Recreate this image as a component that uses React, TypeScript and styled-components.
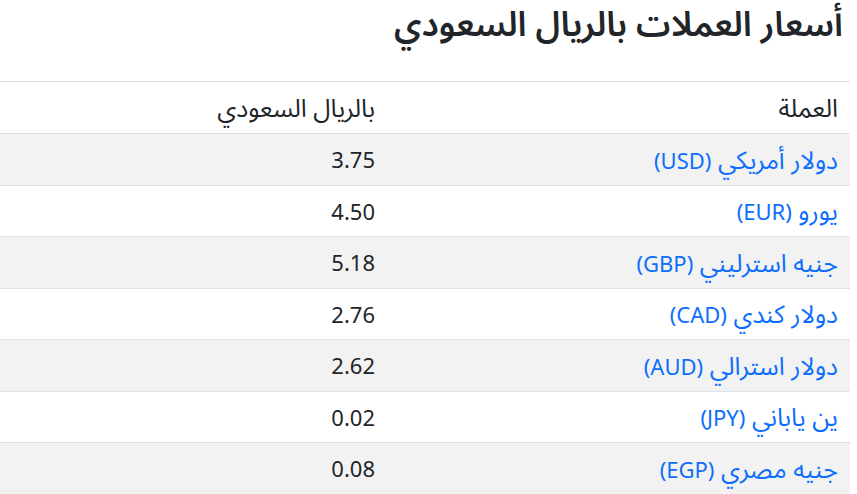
import React from 'react';
import styled, { createGlobalStyle } from 'styled-components';

const GlobalStyle = createGlobalStyle`
  html, body {
    margin: 0;
    padding: 0;
    background: #fff;
  }
  body {
    font-family: "Noto Sans", "Noto Sans Arabic", "Noto Naskh Arabic", "DejaVu Sans", sans-serif;
    color: #212529;
  }
`;

const Page = styled.div`
  direction: rtl;
  width: 850px;
  padding-top: 0;
`;

const Title = styled.h1`
  margin: 0 7px 0 0;
  height: 81px;
  font-size: 34.5px;
  font-weight: 600;
  line-height: 46px;
  color: #212529;
`;

const Table = styled.table`
  width: 850px;
  border-collapse: collapse;
  font-size: 25px;
`;

const HeadCell = styled.th`
  text-align: right;
  vertical-align: middle;
  font-weight: 400;
  height: 51px;
  padding: 0 12px;
  line-height: 1;
  border-top: 1px solid #dee2e6;
  border-bottom: 1px solid #dee2e6;
`;

const Row = styled.tr<{ $striped: boolean }>`
  background: ${(p) => (p.$striped ? '#f2f2f2' : '#fff')};
`;

const Cell = styled.td`
  text-align: right;
  vertical-align: middle;
  height: 50.5px;
  padding: 0 12px;
  line-height: 1;
  border-bottom: 1px solid #dee2e6;
`;

const NameCell = styled(Cell)`
  width: 439px;
`;

const ValueCell = styled(Cell)`
  font-size: 22px;
`;

const Link = styled.a`
  color: #0d6efd;
  text-decoration: none;
`;

const Code = styled.span`
  font-size: 22px;
`;

const rates = [
  { name: 'دولار أمريكي', code: 'USD', value: '3.75' },
  { name: 'يورو', code: 'EUR', value: '4.50' },
  { name: 'جنيه استرليني', code: 'GBP', value: '5.18' },
  { name: 'دولار كندي', code: 'CAD', value: '2.76' },
  { name: 'دولار استرالي', code: 'AUD', value: '2.62' },
  { name: 'ين ياباني', code: 'JPY', value: '0.02' },
  { name: 'جنيه مصري', code: 'EGP', value: '0.08' },
];

const App = () => {
  return (
    <>
      <GlobalStyle />
      <Page>
        <Title>أسعار العملات بالريال السعودي</Title>
        <Table>
          <thead>
            <tr>
              <HeadCell>العملة</HeadCell>
              <HeadCell>بالريال السعودي</HeadCell>
            </tr>
          </thead>
          <tbody>
            {rates.map((r, i) => (
              <Row key={r.code} $striped={i % 2 === 0}>
                <NameCell>
                  <Link href="#">
                    {r.name} <Code>({r.code})</Code>
                  </Link>
                </NameCell>
                <ValueCell>{r.value}</ValueCell>
              </Row>
            ))}
          </tbody>
        </Table>
      </Page>
    </>
  );
};

export default App;
